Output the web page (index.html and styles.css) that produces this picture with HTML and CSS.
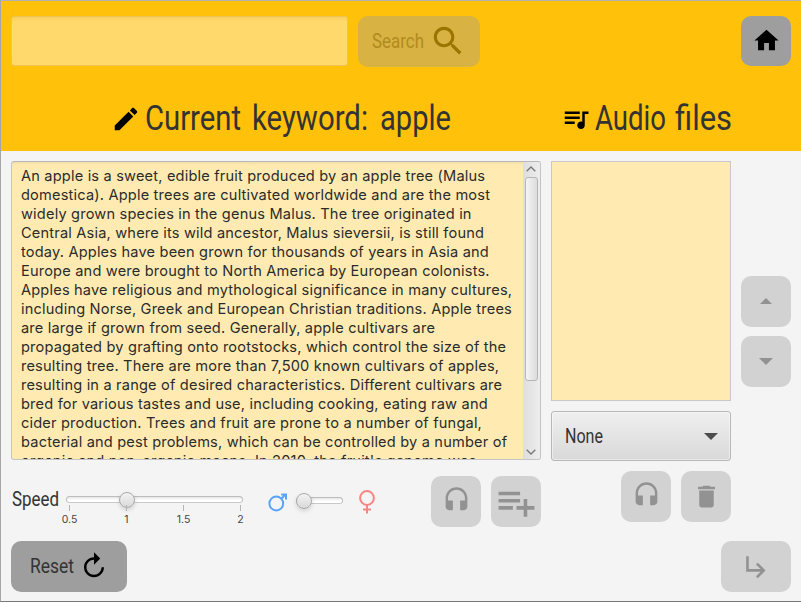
FILE: index.html
```html
<!DOCTYPE html>
<html lang="en">
<head>
<meta charset="utf-8">
<title>Audio editor</title>
<link rel="stylesheet" href="styles.css">
</head>
<body>
<div class="app">
  <header class="header">
    <div class="toolbar">
      <div class="field"></div>
      <div class="btn search disabled">
        <svg class="label" width="54" height="30"><text x="0" y="21" font-size="20" textLength="52" lengthAdjust="spacingAndGlyphs">Search</text></svg>
        <svg class="search-icon" width="38" height="38" viewBox="0 0 24 24"><path d="M15.5 14h-.79l-.28-.27C15.41 12.59 16 11.11 16 9.5 16 5.91 13.09 3 9.5 3S3 5.91 3 9.5 5.91 16 9.5 16c1.61 0 3.09-.59 4.23-1.57l.27.28v.79l5 4.99L20.49 19l-4.99-5zm-6 0C7.01 14 5 11.99 5 9.5S7.01 5 9.5 5 14 7.01 14 9.5 11.99 14 9.5 14z"/></svg>
      </div>
      <div class="btn home"><svg width="29" height="29" viewBox="0 0 24 24"><path d="M10 20v-6h4v6h5v-8h3L12 3 2 12h3v8z"/></svg></div>
    </div>
    <div class="titles">
      <div class="title keyword">
        <svg width="30" height="30" viewBox="0 0 24 24"><path d="M3 17.25V21h3.75L17.81 9.94l-3.75-3.75L3 17.25zM20.71 7.04c.39-.39.39-1.02 0-1.41l-2.34-2.34c-.39-.39-1.02-.39-1.41 0l-1.83 1.83 3.75 3.75 1.83-1.83z"/></svg>
        <svg class="label" width="308" height="46"><text y="34" font-size="34.500"><tspan x="0" textLength="96" lengthAdjust="spacingAndGlyphs">Current</tspan> <tspan x="107" textLength="116" lengthAdjust="spacingAndGlyphs">keyword:</tspan> <tspan x="235" textLength="71" lengthAdjust="spacingAndGlyphs">apple</tspan></text></svg>
      </div>
      <div class="title audio">
        <svg width="30" height="30" viewBox="0 0 24 24"><path d="M15 6H3v2h12V6zm0 4H3v2h12v-2zM3 16h8v-2H3v2zM17 6v8.18c-.31-.11-.65-.18-1-.18-1.66 0-3 1.34-3 3s1.34 3 3 3 3-1.34 3-3V8h3V6h-5z"/></svg>
        <svg class="label" width="140" height="46"><text y="34" font-size="34.500"><tspan x="0" textLength="71" lengthAdjust="spacingAndGlyphs">Audio</tspan> <tspan x="80" textLength="57" lengthAdjust="spacingAndGlyphs">files</tspan></text></svg>
      </div>
    </div>
  </header>

  <main class="main">
    <section class="left">
      <div class="textarea">
        <p class="text">An apple is a sweet, edible fruit produced by an apple tree (Malus<br>domestica). Apple trees are cultivated worldwide and are the most<br>widely grown species in the genus Malus. The tree originated in<br>Central Asia, where its wild ancestor, Malus sieversii, is still found<br>today. Apples have been grown for thousands of years in Asia and<br>Europe and were brought to North America by European colonists.<br>Apples have religious and mythological significance in many cultures,<br>including Norse, Greek and European Christian traditions. Apple trees<br>are large if grown from seed. Generally, apple cultivars are<br>propagated by grafting onto rootstocks, which control the size of the<br>resulting tree. There are more than 7,500 known cultivars of apples,<br>resulting in a range of desired characteristics. Different cultivars are<br>bred for various tastes and use, including cooking, eating raw and<br>cider production. Trees and fruit are prone to a number of fungal,<br>bacterial and pest problems, which can be controlled by a number of<br>organic and non-organic means. In 2010, the fruit's genome was</p>
        <div class="scrollbar">
          <svg width="10" height="6" viewBox="0 0 10 6"><path class="chevron" d="M.7 5.3 5 1l4.300 4.300"/></svg>
          <div class="thumb"></div>
          <svg class="down" width="10" height="6" viewBox="0 0 10 6"><path class="chevron" d="M.7.7 5 5 9.300.7"/></svg>
        </div>
      </div>
      <div class="controls">
        <svg class="label speed" width="50" height="30"><text x="0" y="22" font-size="20" textLength="47" lengthAdjust="spacingAndGlyphs">Speed</text></svg>
        <div class="slider">
          <div class="track"><div class="knob"></div></div>
          <div class="ticks"><span>0.5</span><span>1</span><span>1.5</span><span>2</span></div>
        </div>
        <svg class="male" width="20" height="20" viewBox="0 0 20 20"><circle cx="8.300" cy="11.500" r="6.900"/><path d="M13 7l4.500-4.500M13.200 2.500h4.800v5"/></svg>
        <div class="track gender"><div class="knob"></div></div>
        <svg class="female" width="18" height="24" viewBox="0 0 18 24"><circle cx="9" cy="8" r="6.900"/><path d="M9 15v8.500M5 19.500h8"/></svg>
        <div class="btn disabled listen"><svg width="29" height="29" viewBox="0 0 24 24"><path d="M12 1c-4.970 0-9 4.030-9 9v7c0 1.660 1.340 3 3 3h3v-8H5v-2c0-3.870 3.130-7 7-7s7 3.130 7 7v2h-4v8h3c1.660 0 3-1.340 3-3v-7c0-4.970-4.030-9-9-9z"/></svg></div>
        <div class="btn disabled add"><svg width="43" height="43" viewBox="0 0 24 24"><path d="M14 10H2v2h12v-2zm0-4H2v2h12V6zm4 8v-4h-2v4h-4v2h4v4h2v-4h4v-2h-4zM2 16h8v-2H2v2z"/></svg></div>
      </div>
    </section>
    <section class="files">
      <div class="list"></div>
      <div class="combo">
        <svg class="label" width="42" height="30"><text x="0" y="22" font-size="20" textLength="38" lengthAdjust="spacingAndGlyphs">None</text></svg>
        <svg width="14" height="7" viewBox="0 0 14 7"><path d="M0 0h14L7 7z" fill="#4d4d4d"/></svg>
      </div>
      <div class="file-actions">
        <div class="btn disabled listen-file"><svg width="29" height="29" viewBox="0 0 24 24"><path d="M12 1c-4.970 0-9 4.030-9 9v7c0 1.660 1.340 3 3 3h3v-8H5v-2c0-3.870 3.130-7 7-7s7 3.130 7 7v2h-4v8h3c1.660 0 3-1.340 3-3v-7c0-4.970-4.030-9-9-9z"/></svg></div>
        <div class="btn disabled"><svg width="29" height="29" viewBox="0 0 24 24"><path d="M6 19c0 1.100.9 2 2 2h8c1.100 0 2-.9 2-2V7H6v12zM19 4h-3.500l-1-1h-5l-1 1H5v2h14V4z"/></svg></div>
      </div>
    </section>
    <aside class="order">
      <div class="btn disabled"><svg width="12" height="6" viewBox="0 0 12 6"><path d="M0 6h12L6 0z"/></svg></div>
      <div class="btn disabled"><svg width="14" height="7" viewBox="0 0 14 7"><path d="M0 0h14L7 7z"/></svg></div>
    </aside>
  </main>

  <footer class="footer">
    <div class="btn reset">
      <svg class="label" width="46" height="30"><text x="0" y="21" font-size="20" textLength="44" lengthAdjust="spacingAndGlyphs">Reset</text></svg>
      <svg class="reset-icon" width="30" height="30" viewBox="0 0 24 24"><path transform="matrix(-1 0 0 1 24 0)" d="M12 5V1L7 6l5 5V7c3.310 0 6 2.690 6 6s-2.690 6-6 6-6-2.690-6-6H4c0 4.420 3.580 8 8 8s8-3.580 8-8-3.580-8-8-8z"/></svg>
    </div>
    <div class="btn disabled next"><svg width="31" height="31" viewBox="0 0 24 24"><path d="M19 15l-6 6-1.420-1.420L15.170 16H4V4h2v10h9.170l-3.590-3.580L13 9l6 6z"/></svg></div>
  </footer>
</div>
</body>
</html>
```

FILE: styles.css
```css
* { box-sizing: border-box; }
body { margin: 0; font-family: Inter, "Liberation Sans", sans-serif; }
svg { display: block; flex: none; }
.app {
  width: 801px; height: 602px; overflow: hidden;
  background: #f4f4f4;
  border-top: 1px solid #b1b1b1;
  border-left: 1px solid #a5a5a5;
  border-bottom: 1px solid #777;
}
.label { font-family: Roboto, sans-serif; fill: #333; overflow: visible; }

.header { height: 150px; background: #ffc10a; padding: 15px 10px 0; }
.toolbar { display: flex; height: 51px; }
.field {
  width: 337px; height: 50px; border-radius: 3px;
  border: 1px solid #edc354;
  background: linear-gradient(#f8d060, #ffd96b 5px);
}
.btn {
  width: 50px; height: 51px; border-radius: 10px;
  background: #9e9e9e;
  display: flex; align-items: center; justify-content: center;
}
.btn.disabled { background: #d2d2d2; }
.btn.disabled svg { fill: #929292; }
.btn.search { width: 122px; margin-left: 10px; background: #d8b243; justify-content: flex-start; padding-left: 14px; }
.btn.search .label { fill: #b28b1d; }
.btn.search .search-icon { fill: #9b7500; margin: -2px 0 0 3px; }
.btn.home { height: 50px; margin-left: auto; }
.btn.home svg { margin-top: -1px; }

.titles { display: flex; padding: 29px 0 0 100px; }
.title { display: flex; height: 46px; align-items: center; }
.title .label { font-weight: 400; }
.keyword .label { margin-left: 4px; }
.audio { margin-left: 9px; }
.keyword { width: 441px; }
.audio .label { margin-left: 4px; }

.main { display: flex; gap: 10px; padding: 10px 10px 0; height: 380px; }
.left { width: 530px; }
.textarea {
  height: 299px; display: flex; overflow: hidden;
  border: 1px solid #c4c4c4; border-top-color: #b8b8b8; border-radius: 3px;
  background: linear-gradient(#f2dfa9, #ffebb2 4px);
}
.text {
  margin: 0; padding: 5px 0 0 9px; width: 511px; flex: none;
  font-size: 14.6px; line-height: 19px; letter-spacing: 0.18px; color: #2b2b2b; white-space: nowrap;
}
.scrollbar {
  width: 17px; padding: 4px 1px 0 0; background: linear-gradient(90deg, #dedede, #ededed);
  display: flex; flex-direction: column; align-items: center;
}
.chevron { fill: none; stroke: #777; stroke-width: 1.3; }
.thumb {
  width: 13px; height: 204px; margin-top: 5px;
  border: 1px solid #b5b5b5; border-radius: 3px;
  background: linear-gradient(90deg, #f5f5f5, #dcdcdc);
}
.down { margin: auto 0 4px; }

.controls { display: flex; padding-top: 16px; height: 67px; }
.speed { margin: 8px 0 0 1px; }
.slider { width: 177px; margin: 20px 0 0 4px; }
.track {
  height: 7px; border: 1px solid #bdbdbd; border-bottom-color: #c9c9c9; border-radius: 4px;
  background: linear-gradient(#e5e5e5, #fff 60%);
  display: flex; align-items: center;
}
.knob {
  width: 16px; height: 16px; flex: none; border-radius: 50%;
  border: 1px solid #a9a9a9; background: linear-gradient(#f3f3f3, #d9d9d9);
  box-shadow: 0 2px 4px rgba(0, 0, 0, .14);
}
.slider .knob { margin-left: 52px; }
.ticks { display: grid; grid-template-columns: repeat(4, 57px); margin: 2px 0 0 -25px; }
.ticks span { text-align: center; font-size: 10.5px; line-height: 14px; color: #444; }
.ticks span::before { content: ""; display: block; width: 1px; height: 6px; margin: 0 auto 2px; background: #b5b5b5; }
.male, .female { fill: none; stroke-width: 2; }
.male { stroke: #58a5f8; margin: 16px 0 0 25px; }
.female { stroke: #f98484; margin: 14px 0 0 15px; }
.gender { width: 47px; margin: 21px 0 0 8px; }
.gender .knob { margin-left: -1px; }
.listen { margin-left: 55px; }
.listen svg, .listen-file svg { margin-top: -3px; }
.add { margin-left: 10px; }
.add svg { margin-top: 1px; }

.files { width: 180px; }
.list { height: 240px; background: #ffebb2; border: 1px solid #c8c8c8; }
.combo {
  margin-top: 10px; height: 50px; padding: 0 12px 0 13px;
  display: flex; justify-content: space-between; align-items: center;
  border: 1px solid #b8b8b8; border-radius: 3px;
  background: linear-gradient(#efefef, #d9d9d9);
  box-shadow: inset 0 0 0 1px rgba(255, 255, 255, .45);
}
.file-actions { display: flex; gap: 10px; justify-content: flex-end; padding-top: 10px; }
.order { width: 50px; padding-top: 115px; display: flex; flex-direction: column; gap: 9px; }
.order svg { margin-top: -1px; }

.footer { display: flex; justify-content: space-between; padding: 10px; height: 71px; }
.btn.reset { width: 116px; justify-content: flex-start; padding-left: 19px; }
.reset-icon { margin: -2px 0 0 3px; }
.btn.next { width: 70px; }
.btn.next svg { margin-top: -1px; }
```
